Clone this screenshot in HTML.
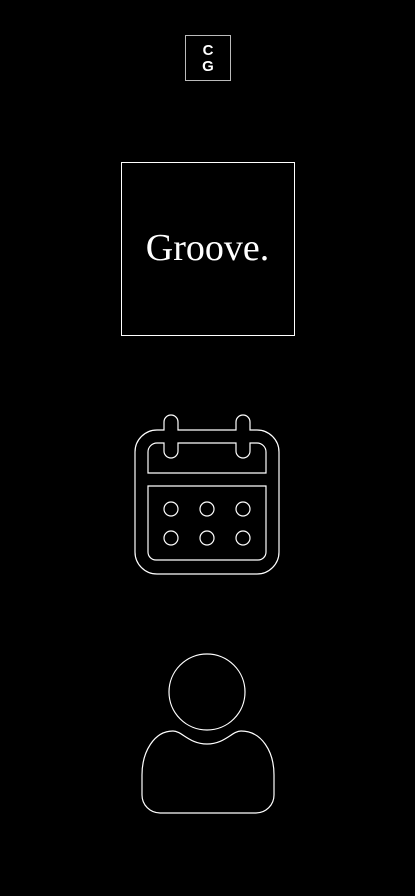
<!DOCTYPE html>
<html><head><meta charset="utf-8"><style>
html,body{margin:0;padding:0;background:#000;width:415px;height:896px;overflow:hidden;position:relative}
.cg{position:absolute;left:185px;top:35px;width:46px;height:46px;border:1.5px solid #bbb;box-sizing:border-box;color:#fff;font-family:"Liberation Sans",sans-serif;font-weight:bold;font-size:15px;line-height:16px;text-align:center;padding-top:7px}
.g{position:absolute;left:121px;top:162px;width:174px;height:174px;border:1px solid #fff;box-sizing:border-box}
.t{position:absolute;left:0;width:415px;top:226px;text-align:center;color:#fff;font-family:"Liberation Serif",serif;font-size:38px;line-height:44px}
svg{position:absolute;left:0;top:0}
</style></head><body>
<div class="cg">C<br>G</div>
<div class="g"></div>
<div class="t">Groove.</div>
<svg width="415" height="896" fill="none" stroke="#fff" stroke-width="1.2">
<path d="M164,430 H157 A22,22 0 0 0 135,452 V552 A22,22 0 0 0 157,574 H257 A22,22 0 0 0 279,552 V452 A22,22 0 0 0 257,430 H250 V422 A7,7 0 0 0 236,422 V430 H178 V422 A7,7 0 0 0 164,422 Z"/>
<path d="M164,443 H157 A9,9 0 0 0 148,452 V473 H266 V452 A9,9 0 0 0 257,443 H250 V451 A7,7 0 0 1 236,451 V443 H178 V451 A7,7 0 0 1 164,451 Z"/>
<path d="M148,486 H266 V552 A8,8 0 0 1 258,560 H156 A8,8 0 0 1 148,552 Z"/>
<circle cx="171" cy="509" r="7"/><circle cx="207" cy="509" r="7"/><circle cx="243" cy="509" r="7"/>
<circle cx="171" cy="538" r="7"/><circle cx="207" cy="538" r="7"/><circle cx="243" cy="538" r="7"/>
<circle cx="207" cy="692" r="38"/>
<path d="M207,744 C225,744 232,731 241,731 C262,731 274,752 274,775 V795 A18,18 0 0 1 256,813 H160 A18,18 0 0 1 142,795 V775 C142,752 154,731 173,731 C182,731 189,744 207,744 Z"/>
</svg>
</body></html>
